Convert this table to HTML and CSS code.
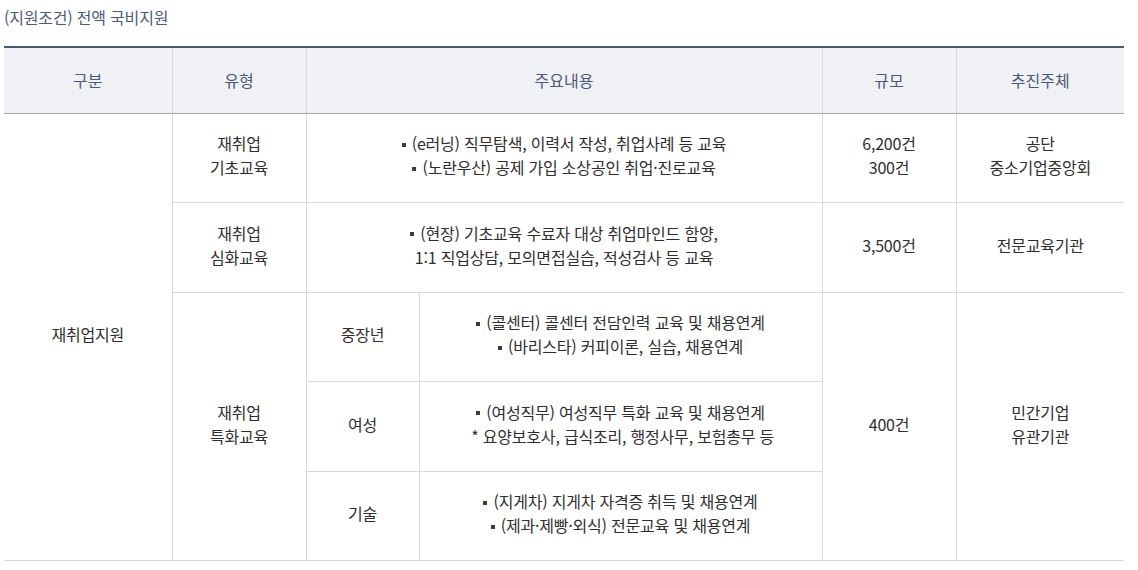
FILE: index.html
```html
<!DOCTYPE html>
<html lang="ko">
<head>
<meta charset="utf-8">
<link rel="stylesheet" href="styles.css">
</head>
<body>
<div class="wrap">
  <p class="caption">(지원조건) 전액 국비지원</p>
  <table class="tbl">
    <colgroup>
      <col class="c1"><col class="c2"><col class="c3"><col class="c4"><col class="c5"><col class="c6">
    </colgroup>
    <thead>
      <tr>
        <th>구분</th>
        <th>유형</th>
        <th colspan="2">주요내용</th>
        <th>규모</th>
        <th>추진주체</th>
      </tr>
    </thead>
    <tbody>
      <tr class="r88">
        <td rowspan="5" class="first">재취업지원</td>
        <td>재취업<br>기초교육</td>
        <td colspan="2"><span class="b"></span>(e러닝) 직무탐색, 이력서 작성, 취업사례 등 교육<br><span class="b"></span>(노란우산) 공제 가입 소상공인 취업·진로교육</td>
        <td>6,200건<br>300건</td>
        <td class="last">공단<br>중소기업중앙회</td>
      </tr>
      <tr class="r89">
        <td>재취업<br>심화교육</td>
        <td colspan="2"><span class="b"></span>(현장) 기초교육 수료자 대상 취업마인드 함양,<br>1:1 직업상담, 모의면접실습, 적성검사 등 교육</td>
        <td>3,500건</td>
        <td class="last">전문교육기관</td>
      </tr>
      <tr class="r88">
        <td rowspan="3">재취업<br>특화교육</td>
        <td>중장년</td>
        <td><span class="b"></span>(콜센터) 콜센터 전담인력 교육 및 채용연계<br><span class="b"></span>(바리스타) 커피이론, 실습, 채용연계</td>
        <td rowspan="3">400건</td>
        <td rowspan="3" class="last">민간기업<br>유관기관</td>
      </tr>
      <tr class="r89">
        <td>여성</td>
        <td><span class="b"></span>(여성직무) 여성직무 특화 교육 및 채용연계<br>&nbsp;* 요양보호사, 급식조리, 행정사무, 보험총무 등</td>
      </tr>
      <tr class="r88">
        <td>기술</td>
        <td><span class="b"></span>(지게차) 지게차 자격증 취득 및 채용연계<br><span class="b"></span>(제과·제빵·외식) 전문교육 및 채용연계</td>
      </tr>
    </tbody>
  </table>
</div>
</body>
</html>
```

FILE: styles.css
```css
html, body {
  margin: 0;
  padding: 0;
  background: #ffffff;
}
body {
  font-family: "Noto Sans CJK KR", "Noto Sans", sans-serif;
  font-size: 16px;
  color: #2e2e2e;
}
.wrap {
  padding: 0 14px 0 4px;
}
.caption {
  margin: 0;
  padding-top: 6px;
  height: 40px;
  line-height: 22px;
  color: #4f5a7a;
  font-size: 16px;
  letter-spacing: -0.2px;
}
.tbl {
  width: 1120px;
  border-collapse: collapse;
  table-layout: fixed;
  border-top: 2px solid #4f5670;
  border-bottom: 1px solid #d9d9d9;
}
.c1 { width: 168px; }
.c2 { width: 134px; }
.c3 { width: 113px; }
.c4 { width: 403px; }
.c5 { width: 134px; }
.c6 { width: 168px; }
.tbl th {
  height: 63px;
  padding: 0 0 2px;
  background: #f0f1f5;
  color: #4c5878;
  font-weight: 400;
  font-size: 16px;
  border-bottom: 1px solid #a8a8a8;
  border-left: 1px solid #d9d9d9;
  border-right: 1px solid #d9d9d9;
}
.tbl th:first-child { border-left: none; }
.tbl th:last-child { border-right: none; }
.tbl td {
  padding: 0 0 6px;
  text-align: center;
  vertical-align: middle;
  line-height: 24px;
  border: 1px solid #d9d9d9;
  letter-spacing: -0.2px;
}
.r88 td { height: 82px; }
.r89 td { height: 83px; }
.tbl td.first { border-left: none; }
.tbl td.last { border-right: none; }
.b {
  display: inline-block;
  width: 4px;
  height: 4px;
  background: #3a3a3a;
  vertical-align: middle;
  margin-right: 6px;
  position: relative;
  top: -1px;
}
```
